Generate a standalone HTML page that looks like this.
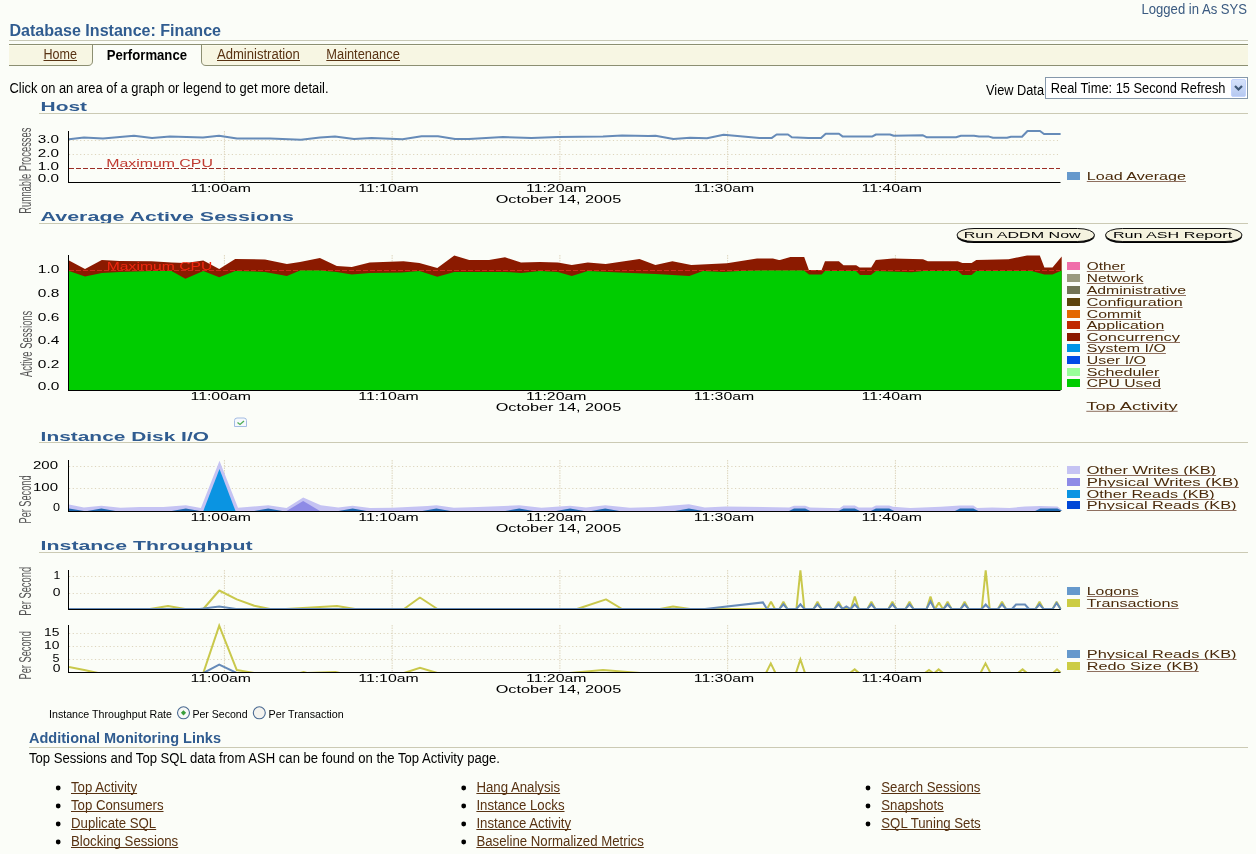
<!DOCTYPE html>
<html><head><meta charset="utf-8"><title>Performance</title>
<style>
html,body{margin:0;padding:0;background:#fbfdf8;width:1256px;height:854px;overflow:hidden}
svg{display:block;position:absolute;left:0;top:0;will-change:transform}
text{font-family:"Liberation Sans", sans-serif}
</style></head><body>
<svg width="1256" height="854" viewBox="0 0 1256 854">
<rect x="0" y="0" width="1256" height="854" fill="#fbfdf8"/>
<text x="9.5" y="36" font-size="16" fill="#305c90" font-weight="bold" textLength="211.5" lengthAdjust="spacingAndGlyphs">Database Instance: Finance</text>
<text transform="translate(1141.5,14) scale(1,1.07)" x="0" y="0" font-size="13" fill="#3a5a80" textLength="105.5" lengthAdjust="spacingAndGlyphs">Logged in As SYS</text>
<line x1="9" y1="40.5" x2="1248" y2="40.5" stroke="#c9c9b6" stroke-width="1"/>
<path d="M9,45 H92.5 V61 Q92.5,65.5 88,65.5 H9 Z" fill="#f7f6e3"/>
<path d="M201.5,45 H1248 V65.5 H206 Q201.5,65.5 201.5,61 Z" fill="#f7f6e3"/>
<line x1="9" y1="44.5" x2="1248" y2="44.5" stroke="#8c8f72" stroke-width="1"/>
<line x1="9" y1="45.5" x2="92" y2="45.5" stroke="#fdfcec" stroke-width="1"/>
<line x1="202" y1="45.5" x2="1248" y2="45.5" stroke="#fdfcec" stroke-width="1"/>
<path d="M9,65.5 H88 Q92.5,65.5 92.5,61 V45" fill="none" stroke="#8c8f72" stroke-width="1"/>
<path d="M201.5,45 V61 Q201.5,65.5 206,65.5 H1248" fill="none" stroke="#8c8f72" stroke-width="1"/>
<text transform="translate(43.5,59) scale(1,1.07)" x="0" y="0" font-size="13" fill="#583212" textLength="33.5" lengthAdjust="spacingAndGlyphs">Home</text>
<line x1="43.5" y1="60.5" x2="77" y2="60.5" stroke="#583212" stroke-width="1"/>
<text transform="translate(106.7,59.6) scale(1,1.1)" x="0" y="0" font-size="13" fill="#000" font-weight="bold" textLength="80.3" lengthAdjust="spacingAndGlyphs">Performance</text>
<text transform="translate(217,59) scale(1,1.07)" x="0" y="0" font-size="13" fill="#583212" textLength="82.8" lengthAdjust="spacingAndGlyphs">Administration</text>
<line x1="217" y1="60.5" x2="300" y2="60.5" stroke="#583212" stroke-width="1"/>
<text transform="translate(326.3,59) scale(1,1.07)" x="0" y="0" font-size="13" fill="#583212" textLength="73.5" lengthAdjust="spacingAndGlyphs">Maintenance</text>
<line x1="326.3" y1="60.5" x2="400" y2="60.5" stroke="#583212" stroke-width="1"/>
<text transform="translate(9.5,93.4) scale(1,1.07)" x="0" y="0" font-size="13" fill="#000" textLength="319" lengthAdjust="spacingAndGlyphs">Click on an area of a graph or legend to get more detail.</text>
<text transform="translate(986,95) scale(1,1.07)" x="0" y="0" font-size="13" fill="#000" textLength="58" lengthAdjust="spacingAndGlyphs">View Data</text>
<rect x="1045.5" y="77.5" width="202" height="21" fill="#ffffff" stroke="#8598ab" stroke-width="1"/>
<text transform="translate(1050.8,93) scale(1,1.07)" x="0" y="0" font-size="13" fill="#000" textLength="174.7" lengthAdjust="spacingAndGlyphs">Real Time: 15 Second Refresh</text>
<defs><linearGradient id="sg" x1="0" y1="0" x2="0" y2="1"><stop offset="0" stop-color="#d6e2fb"/><stop offset="1" stop-color="#b5c8f0"/></linearGradient></defs>
<rect x="1231.5" y="79.5" width="14" height="17" rx="1.5" fill="url(#sg)" stroke="#c3d3fd" stroke-width="1"/>
<path d="M1235,86 L1238.5,89.5 L1242,86" fill="none" stroke="#3e5675" stroke-width="2.2"/>
<text x="40.6" y="111" font-size="13" fill="#305c90" font-weight="bold" textLength="46.5" lengthAdjust="spacingAndGlyphs">Host</text>
<line x1="39" y1="113.5" x2="1248" y2="113.5" stroke="#cbcab4" stroke-width="1"/>
<text x="40.6" y="220.5" font-size="13" fill="#305c90" font-weight="bold" textLength="253.4" lengthAdjust="spacingAndGlyphs">Average Active Sessions</text>
<line x1="39" y1="223.5" x2="1248" y2="223.5" stroke="#cbcab4" stroke-width="1"/>
<text x="40.6" y="440.7" font-size="13" fill="#305c90" font-weight="bold" textLength="168.4" lengthAdjust="spacingAndGlyphs">Instance Disk I/O</text>
<line x1="39" y1="442.5" x2="1248" y2="442.5" stroke="#cbcab4" stroke-width="1"/>
<text x="40.6" y="549.8" font-size="13" fill="#305c90" font-weight="bold" textLength="212" lengthAdjust="spacingAndGlyphs">Instance Throughput</text>
<line x1="39" y1="552.5" x2="1248" y2="552.5" stroke="#cbcab4" stroke-width="1"/>
<line x1="224.4" y1="131" x2="224.4" y2="182" stroke="#ddd5bd" stroke-width="1" stroke-dasharray="1.5,1"/>
<line x1="392.15" y1="131" x2="392.15" y2="182" stroke="#ddd5bd" stroke-width="1" stroke-dasharray="1.5,1"/>
<line x1="559.9" y1="131" x2="559.9" y2="182" stroke="#ddd5bd" stroke-width="1" stroke-dasharray="1.5,1"/>
<line x1="727.65" y1="131" x2="727.65" y2="182" stroke="#ddd5bd" stroke-width="1" stroke-dasharray="1.5,1"/>
<line x1="895.4" y1="131" x2="895.4" y2="182" stroke="#ddd5bd" stroke-width="1" stroke-dasharray="1.5,1"/>
<line x1="69" y1="140.5" x2="1058" y2="140.5" stroke="#ddd5bd" stroke-width="1" stroke-dasharray="1.2,2.5"/>
<line x1="69" y1="154.5" x2="1058" y2="154.5" stroke="#ddd5bd" stroke-width="1" stroke-dasharray="1.2,2.5"/>
<polyline points="69.0,139.3 84.0,137.4 103.0,138.6 134.0,135.7 152.0,138.1 170.0,136.5 203.0,137.4 219.0,135.7 237.0,138.4 270.0,138.6 301.0,139.8 320.0,137.4 335.0,136.5 354.0,138.9 371.5,138.1 402.5,139.3 421.6,136.2 438.0,136.2 455.0,138.9 469.0,138.9 503.0,137.0 531.5,138.1 557.8,137.0 603.0,136.5 622.0,135.5 648.5,136.0 655.5,135.8 673.4,139.1 690.0,137.7 707.0,138.2 723.6,134.8 759.4,137.9 771.5,138.1 776.6,134.5 788.0,134.5 791.8,137.3 808.4,138.0 821.0,138.0 825.7,133.8 839.0,133.8 842.8,136.6 872.0,136.6 876.0,134.5 890.0,134.5 893.8,135.8 923.0,135.3 926.9,137.3 956.0,137.3 961.0,135.8 974.0,135.8 979.0,136.6 989.0,136.6 993.0,137.8 1007.0,137.8 1011.0,136.8 1022.0,136.8 1027.5,131.0 1040.0,131.0 1044.0,134.0 1060.6,134.0" fill="none" stroke="#668bb8" stroke-width="2" stroke-linejoin="round"/>
<line x1="69" y1="168.5" x2="1060" y2="168.5" stroke="#9b2d26" stroke-width="1" stroke-dasharray="5,2"/>
<text x="106.2" y="167.1" font-size="10" fill="#c03a30" textLength="106.7" lengthAdjust="spacingAndGlyphs">Maximum CPU</text>
<line x1="68.5" y1="131" x2="68.5" y2="183" stroke="#000" stroke-width="1"/>
<line x1="68" y1="182.5" x2="1060.5" y2="182.5" stroke="#000" stroke-width="1"/>
<text x="37.7" y="143" font-size="10" fill="#000" textLength="21.2" lengthAdjust="spacingAndGlyphs">3.0</text>
<text x="37.7" y="156.5" font-size="10" fill="#000" textLength="21.2" lengthAdjust="spacingAndGlyphs">2.0</text>
<text x="37.7" y="170.4" font-size="10" fill="#000" textLength="21.2" lengthAdjust="spacingAndGlyphs">1.0</text>
<text x="37.7" y="181.7" font-size="10" fill="#000" textLength="21.2" lengthAdjust="spacingAndGlyphs">0.0</text>
<text x="190.5" y="191.5" font-size="10" fill="#000" textLength="60.5" lengthAdjust="spacingAndGlyphs">11:00am</text>
<text x="358.25" y="191.5" font-size="10" fill="#000" textLength="60.5" lengthAdjust="spacingAndGlyphs">11:10am</text>
<text x="526.0" y="191.5" font-size="10" fill="#000" textLength="60.5" lengthAdjust="spacingAndGlyphs">11:20am</text>
<text x="693.75" y="191.5" font-size="10" fill="#000" textLength="60.5" lengthAdjust="spacingAndGlyphs">11:30am</text>
<text x="861.5" y="191.5" font-size="10" fill="#000" textLength="60.5" lengthAdjust="spacingAndGlyphs">11:40am</text>
<text x="495.7" y="202.8" font-size="10" fill="#000" textLength="125.5" lengthAdjust="spacingAndGlyphs">October 14, 2005</text>
<text transform="translate(30.8,170.7) rotate(-90)" x="0" y="0" font-size="16" fill="#555" text-anchor="middle" textLength="86" lengthAdjust="spacingAndGlyphs">Runnable Processes</text>
<rect x="1067" y="172" width="13" height="8" fill="#6699cc"/>
<text x="1086.8" y="180" font-size="10" fill="#4a2a0a" textLength="99.2" lengthAdjust="spacingAndGlyphs">Load Average</text>
<line x1="1086.8" y1="181.5" x2="1186.0" y2="181.5" stroke="#8f7060" stroke-width="1"/>
<line x1="224.4" y1="255" x2="224.4" y2="390" stroke="#ddd5bd" stroke-width="1" stroke-dasharray="1.5,1"/>
<line x1="392.15" y1="255" x2="392.15" y2="390" stroke="#ddd5bd" stroke-width="1" stroke-dasharray="1.5,1"/>
<line x1="559.9" y1="255" x2="559.9" y2="390" stroke="#ddd5bd" stroke-width="1" stroke-dasharray="1.5,1"/>
<line x1="727.65" y1="255" x2="727.65" y2="390" stroke="#ddd5bd" stroke-width="1" stroke-dasharray="1.5,1"/>
<line x1="895.4" y1="255" x2="895.4" y2="390" stroke="#ddd5bd" stroke-width="1" stroke-dasharray="1.5,1"/>
<polygon points="69.0,260.5 85.0,268.9 101.8,259.9 119.7,261.0 151.6,261.3 171.5,262.5 185.4,263.0 203.3,260.5 219.2,268.9 235.2,259.0 265.0,259.5 286.9,264.0 300.0,261.9 319.9,257.9 336.8,265.9 351.8,266.9 369.7,262.5 403.5,261.3 419.4,262.9 437.3,267.9 454.3,255.4 469.2,259.9 489.0,259.9 505.0,257.3 521.0,262.5 540.0,261.9 557.9,262.5 571.8,264.9 587.8,262.5 605.7,263.9 639.5,258.9 655.4,264.9 672.4,261.3 691.3,264.9 727.0,263.3 757.0,258.5 772.9,258.5 778.9,259.9 780.0,260.0 790.4,257.0 804.2,257.0 808.9,269.9 821.6,269.9 825.0,261.2 838.9,261.2 843.5,265.3 856.2,265.3 859.7,267.4 871.2,267.4 875.8,260.0 893.0,258.4 923.0,259.3 927.8,261.2 957.8,261.2 962.4,263.0 971.6,263.0 976.3,260.0 1008.6,259.3 1027.0,255.4 1039.8,255.4 1044.4,267.6 1052.5,267.6 1061.7,256.5 1061.7,390.0 69.0,390.0" fill="#8b1a00"/>
<line x1="69" y1="270.5" x2="1060" y2="270.5" stroke="#d0261c" stroke-width="1" stroke-dasharray="5,2"/>
<polygon points="69.0,270.9 85.0,276.4 101.8,272.9 119.7,271.9 151.6,270.9 171.5,270.9 185.4,278.8 203.3,270.9 219.2,277.2 235.2,270.9 265.0,271.9 286.9,275.9 300.0,270.5 319.9,270.5 336.8,271.9 351.8,274.5 369.7,272.9 401.5,272.5 419.4,270.9 437.3,276.8 454.3,271.9 505.0,271.9 521.0,272.9 540.0,270.9 557.9,271.9 571.8,275.9 587.8,270.9 619.6,272.5 655.4,273.9 689.3,275.9 703.0,270.9 723.0,271.9 739.0,270.9 780.0,270.4 804.0,270.4 809.0,274.6 821.6,274.6 825.0,270.9 856.0,270.9 860.0,275.0 871.0,275.0 876.0,270.9 911.6,272.2 923.0,270.9 958.0,270.9 962.4,275.0 971.6,275.0 976.3,270.9 1008.6,270.9 1031.7,270.9 1044.4,274.6 1052.5,274.6 1061.7,270.4 1061.7,390.0 69.0,390.0" fill="#00cc00"/>
<text x="106.8" y="269.5" font-size="10" fill="#f02810" textLength="105.5" lengthAdjust="spacingAndGlyphs">Maximum CPU</text>
<line x1="68.5" y1="255" x2="68.5" y2="391" stroke="#000" stroke-width="1"/>
<line x1="68" y1="390.5" x2="1060.5" y2="390.5" stroke="#000" stroke-width="1"/>
<text x="37.8" y="272.7" font-size="10" fill="#000" textLength="21.5" lengthAdjust="spacingAndGlyphs">1.0</text>
<text x="37.8" y="296.5" font-size="10" fill="#000" textLength="21.5" lengthAdjust="spacingAndGlyphs">0.8</text>
<text x="37.8" y="320.6" font-size="10" fill="#000" textLength="21.5" lengthAdjust="spacingAndGlyphs">0.6</text>
<text x="37.8" y="344.4" font-size="10" fill="#000" textLength="21.5" lengthAdjust="spacingAndGlyphs">0.4</text>
<text x="37.8" y="368.3" font-size="10" fill="#000" textLength="21.5" lengthAdjust="spacingAndGlyphs">0.2</text>
<text x="37.8" y="389.8" font-size="10" fill="#000" textLength="21.5" lengthAdjust="spacingAndGlyphs">0.0</text>
<text x="190.5" y="399.5" font-size="10" fill="#000" textLength="60.5" lengthAdjust="spacingAndGlyphs">11:00am</text>
<text x="358.25" y="399.5" font-size="10" fill="#000" textLength="60.5" lengthAdjust="spacingAndGlyphs">11:10am</text>
<text x="526.0" y="399.5" font-size="10" fill="#000" textLength="60.5" lengthAdjust="spacingAndGlyphs">11:20am</text>
<text x="693.75" y="399.5" font-size="10" fill="#000" textLength="60.5" lengthAdjust="spacingAndGlyphs">11:30am</text>
<text x="861.5" y="399.5" font-size="10" fill="#000" textLength="60.5" lengthAdjust="spacingAndGlyphs">11:40am</text>
<text x="495.7" y="410.8" font-size="10" fill="#000" textLength="125.5" lengthAdjust="spacingAndGlyphs">October 14, 2005</text>
<text transform="translate(31.5,343.9) rotate(-90)" x="0" y="0" font-size="16" fill="#555" text-anchor="middle" textLength="66.4" lengthAdjust="spacingAndGlyphs">Active Sessions</text>
<rect x="1067" y="262" width="13" height="8" fill="#f06eaa"/>
<text x="1086.8" y="270" font-size="10" fill="#4a2a0a" textLength="38.4" lengthAdjust="spacingAndGlyphs">Other</text>
<line x1="1086.8" y1="271.5" x2="1125.2" y2="271.5" stroke="#8f7060" stroke-width="1"/>
<rect x="1067" y="274" width="13" height="8" fill="#9a9a7e"/>
<text x="1086.8" y="282" font-size="10" fill="#4a2a0a" textLength="56.6" lengthAdjust="spacingAndGlyphs">Network</text>
<line x1="1086.8" y1="283.5" x2="1143.3999999999999" y2="283.5" stroke="#8f7060" stroke-width="1"/>
<rect x="1067" y="286" width="13" height="8" fill="#717354"/>
<text x="1086.8" y="294" font-size="10" fill="#4a2a0a" textLength="99.2" lengthAdjust="spacingAndGlyphs">Administrative</text>
<line x1="1086.8" y1="295.5" x2="1186.0" y2="295.5" stroke="#8f7060" stroke-width="1"/>
<rect x="1067" y="298" width="13" height="8" fill="#5c440b"/>
<text x="1086.8" y="306" font-size="10" fill="#4a2a0a" textLength="95.8" lengthAdjust="spacingAndGlyphs">Configuration</text>
<line x1="1086.8" y1="307.5" x2="1182.6" y2="307.5" stroke="#8f7060" stroke-width="1"/>
<rect x="1067" y="310" width="13" height="8" fill="#e46800"/>
<text x="1086.8" y="318" font-size="10" fill="#4a2a0a" textLength="54.4" lengthAdjust="spacingAndGlyphs">Commit</text>
<line x1="1086.8" y1="319.5" x2="1141.2" y2="319.5" stroke="#8f7060" stroke-width="1"/>
<rect x="1067" y="321" width="13" height="8" fill="#c02800"/>
<text x="1086.8" y="329" font-size="10" fill="#4a2a0a" textLength="77.4" lengthAdjust="spacingAndGlyphs">Application</text>
<line x1="1086.8" y1="330.5" x2="1164.2" y2="330.5" stroke="#8f7060" stroke-width="1"/>
<rect x="1067" y="333" width="13" height="8" fill="#8b1a00"/>
<text x="1086.8" y="341" font-size="10" fill="#4a2a0a" textLength="93.2" lengthAdjust="spacingAndGlyphs">Concurrency</text>
<line x1="1086.8" y1="342.5" x2="1180.0" y2="342.5" stroke="#8f7060" stroke-width="1"/>
<rect x="1067" y="344" width="13" height="8" fill="#0094e7"/>
<text x="1086.8" y="352" font-size="10" fill="#4a2a0a" textLength="79.1" lengthAdjust="spacingAndGlyphs">System I/O</text>
<line x1="1086.8" y1="353.5" x2="1165.8999999999999" y2="353.5" stroke="#8f7060" stroke-width="1"/>
<rect x="1067" y="356" width="13" height="8" fill="#004ae7"/>
<text x="1086.8" y="364" font-size="10" fill="#4a2a0a" textLength="59.2" lengthAdjust="spacingAndGlyphs">User I/O</text>
<line x1="1086.8" y1="365.5" x2="1146.0" y2="365.5" stroke="#8f7060" stroke-width="1"/>
<rect x="1067" y="368" width="13" height="8" fill="#99ff99"/>
<text x="1086.8" y="376" font-size="10" fill="#4a2a0a" textLength="72.5" lengthAdjust="spacingAndGlyphs">Scheduler</text>
<line x1="1086.8" y1="377.5" x2="1159.3" y2="377.5" stroke="#8f7060" stroke-width="1"/>
<rect x="1067" y="379" width="13" height="8" fill="#00cc00"/>
<text x="1086.8" y="387" font-size="10" fill="#4a2a0a" textLength="74.1" lengthAdjust="spacingAndGlyphs">CPU Used</text>
<line x1="1086.8" y1="388.5" x2="1160.8999999999999" y2="388.5" stroke="#8f7060" stroke-width="1"/>
<text x="1086.3" y="409.8" font-size="10" fill="#4a2a0a" textLength="91.3" lengthAdjust="spacingAndGlyphs">Top Activity</text>
<line x1="1086.3" y1="411.3" x2="1177.6" y2="411.3" stroke="#8f7060" stroke-width="1"/>
<path d="M974,230.1 H1077.5 A17,6.5 0 0 1 1077.5,243.1 H974 A17,6.5 0 0 1 974,230.1 Z" fill="#000"/>
<path d="M974,228.5 H1077.5 A17,6.5 0 0 1 1077.5,241.5 H974 A17,6.5 0 0 1 974,228.5 Z" fill="#f5f3df" stroke="#111" stroke-width="1"/>
<text x="963.7" y="238.1" font-size="9.6" fill="#000" textLength="117" lengthAdjust="spacingAndGlyphs">Run ADDM Now</text>
<path d="M1122.5,230.1 H1225 A17,6.5 0 0 1 1225,243.1 H1122.5 A17,6.5 0 0 1 1122.5,230.1 Z" fill="#000"/>
<path d="M1122.5,228.5 H1225 A17,6.5 0 0 1 1225,241.5 H1122.5 A17,6.5 0 0 1 1122.5,228.5 Z" fill="#f5f3df" stroke="#111" stroke-width="1"/>
<text x="1112.9" y="238.1" font-size="9.6" fill="#000" textLength="119.3" lengthAdjust="spacingAndGlyphs">Run ASH Report</text>
<path d="M234.5,420.5 Q234.5,418 237,418 L244,418 Q246.5,418 246.5,420.5 L246.5,426.5 L234.5,426.5 Z" fill="#f6f9fd" stroke="#a4bde3" stroke-width="1"/>
<path d="M237.5,422.5 L240,424.5 L244,421" fill="none" stroke="#4fae55" stroke-width="1.3"/>
<line x1="224.4" y1="460" x2="224.4" y2="511" stroke="#ddd5bd" stroke-width="1" stroke-dasharray="1.5,1"/>
<line x1="392.15" y1="460" x2="392.15" y2="511" stroke="#ddd5bd" stroke-width="1" stroke-dasharray="1.5,1"/>
<line x1="559.9" y1="460" x2="559.9" y2="511" stroke="#ddd5bd" stroke-width="1" stroke-dasharray="1.5,1"/>
<line x1="727.65" y1="460" x2="727.65" y2="511" stroke="#ddd5bd" stroke-width="1" stroke-dasharray="1.5,1"/>
<line x1="895.4" y1="460" x2="895.4" y2="511" stroke="#ddd5bd" stroke-width="1" stroke-dasharray="1.5,1"/>
<line x1="69" y1="466.5" x2="1058" y2="466.5" stroke="#ddd5bd" stroke-width="1" stroke-dasharray="1.2,2.5"/>
<line x1="69" y1="488.5" x2="1058" y2="488.5" stroke="#ddd5bd" stroke-width="1" stroke-dasharray="1.2,2.5"/>
<polygon points="69.0,504.5 83.9,507.4 101.4,505.8 120.5,507.7 139.6,506.9 163.5,506.9 185.8,505.3 200.9,508.0 219.5,460.7 238.0,507.7 268.2,505.3 286.5,508.0 303.2,497.4 320.8,505.3 338.3,507.4 352.6,505.8 370.0,508.0 392.4,507.7 427.5,506.1 436.4,505.3 453.9,507.7 477.8,506.9 519.2,505.3 541.5,507.7 570.1,505.8 586.0,507.4 605.2,505.3 630.0,507.7 653.9,506.9 688.9,504.2 704.8,507.4 725.5,506.4 789.2,507.4 794.0,505.8 805.2,505.8 810.0,507.4 839.6,508.3 843.4,505.5 854.8,505.5 858.7,507.4 872.0,507.4 875.9,505.5 889.2,505.5 893.0,506.8 910.3,508.0 940.8,506.8 960.0,505.5 973.3,505.5 977.1,508.0 992.4,507.4 1009.6,508.0 1025.0,506.4 1040.2,506.0 1057.4,506.4 1061.2,509.3 1061.2,511.0 69.0,511.0" fill="#c5c3f3"/>
<polygon points="286.5,511.0 303.2,501.0 320.0,511.0" fill="#8e8be6"/>
<polygon points="203.3,511.0 219.5,469.1 235.5,511.0" fill="#0a94e2"/>
<polygon points="87.4,511.0 101.4,508.6 115.4,511.0" fill="#2068b0"/>
<polygon points="171.8,511.0 185.8,508.6 199.8,511.0" fill="#2068b0"/>
<polygon points="254.2,511.0 268.2,508.6 282.2,511.0" fill="#2068b0"/>
<polygon points="338.6,511.0 352.6,508.6 366.6,511.0" fill="#2068b0"/>
<polygon points="422.4,511.0 436.4,508.6 450.4,511.0" fill="#2068b0"/>
<polygon points="505.2,511.0 519.2,508.6 533.2,511.0" fill="#2068b0"/>
<polygon points="556.1,511.0 570.1,508.6 584.1,511.0" fill="#2068b0"/>
<polygon points="591.2,511.0 605.2,508.6 619.2,511.0" fill="#2068b0"/>
<polygon points="674.9,511.0 688.9,508.6 702.9,511.0" fill="#2068b0"/>
<polygon points="789.0,511.0 794.0,508.6 805.2,508.6 810.2,511.0" fill="#2068b0"/>
<polygon points="838.4,511.0 843.4,508.6 854.8,508.6 859.8,511.0" fill="#2068b0"/>
<polygon points="870.9,511.0 875.9,508.6 889.2,508.6 894.2,511.0" fill="#2068b0"/>
<polygon points="955.0,511.0 960.0,508.6 973.3,508.6 978.3,511.0" fill="#2068b0"/>
<polygon points="1035.2,511.0 1040.2,508.6 1057.4,508.6 1062.4,511.0" fill="#2068b0"/>
<polygon points="69.0,508.4 84.0,511.0 69.0,511.0" fill="#2068b0"/>
<line x1="68.5" y1="460" x2="68.5" y2="512" stroke="#000" stroke-width="1"/>
<line x1="68" y1="511.5" x2="1060.5" y2="511.5" stroke="#000" stroke-width="1"/>
<text x="33" y="468.6" font-size="10" fill="#000" textLength="25" lengthAdjust="spacingAndGlyphs">200</text>
<text x="33" y="491.4" font-size="10" fill="#000" textLength="25" lengthAdjust="spacingAndGlyphs">100</text>
<text x="53" y="511.2" font-size="10" fill="#000" textLength="7" lengthAdjust="spacingAndGlyphs">0</text>
<text x="190.5" y="520.5" font-size="10" fill="#000" textLength="60.5" lengthAdjust="spacingAndGlyphs">11:00am</text>
<text x="358.25" y="520.5" font-size="10" fill="#000" textLength="60.5" lengthAdjust="spacingAndGlyphs">11:10am</text>
<text x="526.0" y="520.5" font-size="10" fill="#000" textLength="60.5" lengthAdjust="spacingAndGlyphs">11:20am</text>
<text x="693.75" y="520.5" font-size="10" fill="#000" textLength="60.5" lengthAdjust="spacingAndGlyphs">11:30am</text>
<text x="861.5" y="520.5" font-size="10" fill="#000" textLength="60.5" lengthAdjust="spacingAndGlyphs">11:40am</text>
<text x="495.7" y="531.8" font-size="10" fill="#000" textLength="125.5" lengthAdjust="spacingAndGlyphs">October 14, 2005</text>
<text transform="translate(31,499.5) rotate(-90)" x="0" y="0" font-size="16" fill="#555" text-anchor="middle" textLength="48" lengthAdjust="spacingAndGlyphs">Per Second</text>
<rect x="1067" y="466" width="13" height="8" fill="#c5c3f3"/>
<text x="1086.8" y="474" font-size="10" fill="#4a2a0a" textLength="129.3" lengthAdjust="spacingAndGlyphs">Other Writes (KB)</text>
<line x1="1086.8" y1="475.5" x2="1216.1" y2="475.5" stroke="#8f7060" stroke-width="1"/>
<rect x="1067" y="478" width="13" height="8" fill="#8e8be6"/>
<text x="1086.8" y="486" font-size="10" fill="#4a2a0a" textLength="152" lengthAdjust="spacingAndGlyphs">Physical Writes (KB)</text>
<line x1="1086.8" y1="487.5" x2="1238.8" y2="487.5" stroke="#8f7060" stroke-width="1"/>
<rect x="1067" y="490" width="13" height="8" fill="#0a94e2"/>
<text x="1086.8" y="498" font-size="10" fill="#4a2a0a" textLength="127.8" lengthAdjust="spacingAndGlyphs">Other Reads (KB)</text>
<line x1="1086.8" y1="499.5" x2="1214.6" y2="499.5" stroke="#8f7060" stroke-width="1"/>
<rect x="1067" y="501" width="13" height="8" fill="#0047d6"/>
<text x="1086.8" y="509" font-size="10" fill="#4a2a0a" textLength="149.7" lengthAdjust="spacingAndGlyphs">Physical Reads (KB)</text>
<line x1="1086.8" y1="510.5" x2="1236.5" y2="510.5" stroke="#8f7060" stroke-width="1"/>
<line x1="224.4" y1="570" x2="224.4" y2="609" stroke="#ddd5bd" stroke-width="1" stroke-dasharray="1.5,1"/>
<line x1="392.15" y1="570" x2="392.15" y2="609" stroke="#ddd5bd" stroke-width="1" stroke-dasharray="1.5,1"/>
<line x1="559.9" y1="570" x2="559.9" y2="609" stroke="#ddd5bd" stroke-width="1" stroke-dasharray="1.5,1"/>
<line x1="727.65" y1="570" x2="727.65" y2="609" stroke="#ddd5bd" stroke-width="1" stroke-dasharray="1.5,1"/>
<line x1="895.4" y1="570" x2="895.4" y2="609" stroke="#ddd5bd" stroke-width="1" stroke-dasharray="1.5,1"/>
<line x1="69" y1="576.5" x2="1058" y2="576.5" stroke="#ddd5bd" stroke-width="1" stroke-dasharray="1.2,2.5"/>
<line x1="69" y1="593.5" x2="1058" y2="593.5" stroke="#ddd5bd" stroke-width="1" stroke-dasharray="1.2,2.5"/>
<polyline points="69.0,609.0 150.0,609.0 168.0,606.0 185.0,609.0 203.3,609.0 219.2,590.5 236.8,599.4 254.3,605.8 270.0,609.0 286.0,609.0 337.0,606.0 355.0,609.0 404.0,609.0 419.9,597.5 437.4,609.0 577.0,609.0 606.0,599.4 622.0,609.0 660.0,609.0 673.0,606.4 690.0,609.0 760.0,609.0 767.0,609.0 771.0,601.8 775.0,609.0 779.4,609.0 783.4,601.8 787.4,609.0 796.4,609.0 800.4,570.3 804.4,609.0 813.5,609.0 817.5,601.8 821.5,609.0 834.5,609.0 838.5,601.8 842.5,609.0 850.8,609.0 854.8,596.5 858.8,609.0 867.4,609.0 871.4,601.8 875.4,609.0 888.4,609.0 892.4,601.8 896.4,609.0 905.5,609.0 909.5,601.8 913.5,609.0 926.5,609.0 930.5,596.5 934.5,609.0 934.9,609.0 938.9,602.6 942.9,609.0 943.6,609.0 947.6,601.8 951.6,609.0 960.6,609.0 964.6,601.8 968.6,609.0 981.7,609.0 985.7,570.3 989.7,609.0 998.0,609.0 1002.0,601.8 1006.0,609.0 1035.5,609.0 1039.5,601.8 1043.5,609.0 1052.6,609.0 1056.6,601.8 1060.6,609.0 1061.0,609.0" fill="none" stroke="#c9c84b" stroke-width="2" stroke-linejoin="bevel"/>
<polyline points="69.0,609.0 200.0,609.0 219.2,606.4 236.0,609.0 705.0,609.0 762.9,602.4 767.0,609.0 779.4,609.0 783.4,604.3 787.4,609.0 796.4,609.0 800.4,604.3 804.4,609.0 813.5,609.0 817.5,604.3 821.5,609.0 834.5,609.0 838.5,604.3 842.5,609.0 842.4,609.0 846.4,606.5 850.4,609.0 850.8,609.0 854.8,604.3 858.8,609.0 867.4,609.0 871.4,604.3 875.4,609.0 888.4,609.0 892.4,604.3 896.4,609.0 905.5,609.0 909.5,604.3 913.5,609.0 926.5,609.0 930.5,601.3 934.5,609.0 943.6,609.0 947.6,604.3 951.6,609.0 960.6,609.0 964.6,604.3 968.6,609.0 981.7,609.0 985.7,604.5 989.7,609.0 998.0,609.0 1002.0,604.3 1006.0,609.0 1035.5,609.0 1039.5,604.3 1043.5,609.0 1052.6,609.0 1056.6,603.0 1060.6,609.0 1061.0,609.0" fill="none" stroke="#668bb8" stroke-width="2"/>
<polyline points="1012.0,609.0 1016.0,604.5 1025.0,604.5 1029.0,609.0" fill="none" stroke="#668bb8" stroke-width="2"/>
<line x1="68.5" y1="570" x2="68.5" y2="610" stroke="#000" stroke-width="1"/>
<line x1="68" y1="609.5" x2="1060.5" y2="609.5" stroke="#000" stroke-width="1"/>
<text x="53.6" y="579.4" font-size="10" fill="#000" textLength="6.8" lengthAdjust="spacingAndGlyphs">1</text>
<text x="52.7" y="595.9" font-size="10" fill="#000" textLength="7.7" lengthAdjust="spacingAndGlyphs">0</text>
<text transform="translate(31.4,591.3) rotate(-90)" x="0" y="0" font-size="16" fill="#555" text-anchor="middle" textLength="49" lengthAdjust="spacingAndGlyphs">Per Second</text>
<rect x="1067" y="587" width="13" height="8" fill="#6699cc"/>
<text x="1086.8" y="595" font-size="10" fill="#4a2a0a" textLength="51.9" lengthAdjust="spacingAndGlyphs">Logons</text>
<line x1="1086.8" y1="596.5" x2="1138.7" y2="596.5" stroke="#8f7060" stroke-width="1"/>
<rect x="1067" y="599" width="13" height="8" fill="#cccc44"/>
<text x="1086.8" y="607" font-size="10" fill="#4a2a0a" textLength="91.8" lengthAdjust="spacingAndGlyphs">Transactions</text>
<line x1="1086.8" y1="608.5" x2="1178.6" y2="608.5" stroke="#8f7060" stroke-width="1"/>
<line x1="224.4" y1="625" x2="224.4" y2="672" stroke="#ddd5bd" stroke-width="1" stroke-dasharray="1.5,1"/>
<line x1="392.15" y1="625" x2="392.15" y2="672" stroke="#ddd5bd" stroke-width="1" stroke-dasharray="1.5,1"/>
<line x1="559.9" y1="625" x2="559.9" y2="672" stroke="#ddd5bd" stroke-width="1" stroke-dasharray="1.5,1"/>
<line x1="727.65" y1="625" x2="727.65" y2="672" stroke="#ddd5bd" stroke-width="1" stroke-dasharray="1.5,1"/>
<line x1="895.4" y1="625" x2="895.4" y2="672" stroke="#ddd5bd" stroke-width="1" stroke-dasharray="1.5,1"/>
<line x1="69" y1="633.5" x2="1058" y2="633.5" stroke="#ddd5bd" stroke-width="1" stroke-dasharray="1.2,2.5"/>
<line x1="69" y1="646.5" x2="1058" y2="646.5" stroke="#ddd5bd" stroke-width="1" stroke-dasharray="1.2,2.5"/>
<line x1="69" y1="659.5" x2="1058" y2="659.5" stroke="#ddd5bd" stroke-width="1" stroke-dasharray="1.2,2.5"/>
<clipPath id="c2"><rect x="69" y="620" width="1000" height="52"/></clipPath>
<polyline points="69.0,667.1 85.5,670.3 98.0,673.0 203.3,673.0 219.2,625.7 236.8,670.0 254.0,673.0 303.6,673.0 300.0,673.0 303.6,672.0 307.0,673.0 335.5,672.0 340.0,673.0 404.0,673.0 420.0,667.8 437.4,673.0 570.0,673.0 603.0,669.9 640.0,673.0 766.0,673.0 770.8,663.4 775.5,673.0 796.0,673.0 800.4,659.5 805.0,673.0 850.0,673.0 854.7,669.4 859.0,673.0 925.0,673.0 929.0,670.0 933.0,673.0 934.5,673.0 938.6,669.4 943.0,673.0 980.5,673.0 985.5,663.4 990.5,673.0 1018.0,673.0 1022.6,669.4 1027.0,673.0 1053.0,673.0 1057.0,669.4 1061.0,673.0" fill="none" stroke="#c9c84b" stroke-width="2" clip-path="url(#c2)"/>
<polyline points="69.0,673.0 203.3,673.0 219.2,664.6 236.8,673.0 1061.0,673.0" fill="none" stroke="#668bb8" stroke-width="2" clip-path="url(#c2)"/>
<line x1="68.5" y1="625" x2="68.5" y2="673" stroke="#000" stroke-width="1"/>
<line x1="68" y1="672.5" x2="1060.5" y2="672.5" stroke="#000" stroke-width="1"/>
<text x="44" y="635.9" font-size="10" fill="#000" textLength="15.4" lengthAdjust="spacingAndGlyphs">15</text>
<text x="44" y="649" font-size="10" fill="#000" textLength="15.4" lengthAdjust="spacingAndGlyphs">10</text>
<text x="52.5" y="662" font-size="10" fill="#000" textLength="7" lengthAdjust="spacingAndGlyphs">5</text>
<text x="52.7" y="672.2" font-size="10" fill="#000" textLength="7.7" lengthAdjust="spacingAndGlyphs">0</text>
<text x="190.5" y="681.5" font-size="10" fill="#000" textLength="60.5" lengthAdjust="spacingAndGlyphs">11:00am</text>
<text x="358.25" y="681.5" font-size="10" fill="#000" textLength="60.5" lengthAdjust="spacingAndGlyphs">11:10am</text>
<text x="526.0" y="681.5" font-size="10" fill="#000" textLength="60.5" lengthAdjust="spacingAndGlyphs">11:20am</text>
<text x="693.75" y="681.5" font-size="10" fill="#000" textLength="60.5" lengthAdjust="spacingAndGlyphs">11:30am</text>
<text x="861.5" y="681.5" font-size="10" fill="#000" textLength="60.5" lengthAdjust="spacingAndGlyphs">11:40am</text>
<text x="495.7" y="692.8" font-size="10" fill="#000" textLength="125.5" lengthAdjust="spacingAndGlyphs">October 14, 2005</text>
<text transform="translate(31.4,655.3) rotate(-90)" x="0" y="0" font-size="16" fill="#555" text-anchor="middle" textLength="48.3" lengthAdjust="spacingAndGlyphs">Per Second</text>
<rect x="1067" y="650" width="13" height="8" fill="#6699cc"/>
<text x="1086.8" y="658" font-size="10" fill="#4a2a0a" textLength="149.7" lengthAdjust="spacingAndGlyphs">Physical Reads (KB)</text>
<line x1="1086.8" y1="659.5" x2="1236.5" y2="659.5" stroke="#8f7060" stroke-width="1"/>
<rect x="1067" y="662" width="13" height="8" fill="#cccc44"/>
<text x="1086.8" y="670" font-size="10" fill="#4a2a0a" textLength="111.9" lengthAdjust="spacingAndGlyphs">Redo Size (KB)</text>
<line x1="1086.8" y1="671.5" x2="1198.7" y2="671.5" stroke="#8f7060" stroke-width="1"/>
<text x="49" y="718.3" font-size="11.6" fill="#000" textLength="123" lengthAdjust="spacingAndGlyphs">Instance Throughput Rate</text>
<circle cx="183.5" cy="712.8" r="6" fill="#f7f8f6" stroke="#4a6a92" stroke-width="1.1"/>
<path d="M183.5,710.2 L186.1,712.8 L183.5,715.4 L180.9,712.8 Z" fill="#3a9e3a"/>
<text x="192.4" y="718.3" font-size="11.6" fill="#000" textLength="55.2" lengthAdjust="spacingAndGlyphs">Per Second</text>
<circle cx="259.3" cy="712.8" r="6" fill="#f4f3ee" stroke="#4a6a92" stroke-width="1.1"/>
<text x="268.5" y="718.3" font-size="11.6" fill="#000" textLength="75.2" lengthAdjust="spacingAndGlyphs">Per Transaction</text>
<text transform="translate(29,743) scale(1,1.07)" x="0" y="0" font-size="14.5" fill="#305c90" font-weight="bold" textLength="192" lengthAdjust="spacingAndGlyphs">Additional Monitoring Links</text>
<line x1="29" y1="747.5" x2="1248" y2="747.5" stroke="#cbcab4" stroke-width="1"/>
<text transform="translate(29,763.2) scale(1,1.07)" x="0" y="0" font-size="13" fill="#000" textLength="471" lengthAdjust="spacingAndGlyphs">Top Sessions and Top SQL data from ASH can be found on the Top Activity page.</text>
<circle cx="58.2" cy="788" r="2.4" fill="#000"/>
<text transform="translate(71,792) scale(1,1.07)" x="0" y="0" font-size="13" fill="#583212" textLength="66.1" lengthAdjust="spacingAndGlyphs">Top Activity</text>
<line x1="71" y1="793.5" x2="137.07175" y2="793.5" stroke="#583212" stroke-width="1"/>
<circle cx="58.2" cy="806" r="2.4" fill="#000"/>
<text transform="translate(71,810) scale(1,1.07)" x="0" y="0" font-size="13" fill="#583212" textLength="92.5" lengthAdjust="spacingAndGlyphs">Top Consumers</text>
<line x1="71" y1="811.5" x2="163.5195" y2="811.5" stroke="#583212" stroke-width="1"/>
<circle cx="58.2" cy="824" r="2.4" fill="#000"/>
<text transform="translate(71,828) scale(1,1.07)" x="0" y="0" font-size="13" fill="#583212" textLength="85.2" lengthAdjust="spacingAndGlyphs">Duplicate SQL</text>
<line x1="71" y1="829.5" x2="156.18525" y2="829.5" stroke="#583212" stroke-width="1"/>
<circle cx="58.2" cy="842" r="2.4" fill="#000"/>
<text transform="translate(71,846) scale(1,1.07)" x="0" y="0" font-size="13" fill="#583212" textLength="107.2" lengthAdjust="spacingAndGlyphs">Blocking Sessions</text>
<line x1="71" y1="847.5" x2="178.21975" y2="847.5" stroke="#583212" stroke-width="1"/>
<circle cx="463.7" cy="788" r="2.4" fill="#000"/>
<text transform="translate(476.4,792) scale(1,1.07)" x="0" y="0" font-size="13" fill="#583212" textLength="83.7" lengthAdjust="spacingAndGlyphs">Hang Analysis</text>
<line x1="476.4" y1="793.5" x2="560.12475" y2="793.5" stroke="#583212" stroke-width="1"/>
<circle cx="463.7" cy="806" r="2.4" fill="#000"/>
<text transform="translate(476.4,810) scale(1,1.07)" x="0" y="0" font-size="13" fill="#583212" textLength="88.1" lengthAdjust="spacingAndGlyphs">Instance Locks</text>
<line x1="476.4" y1="811.5" x2="564.522125" y2="811.5" stroke="#583212" stroke-width="1"/>
<circle cx="463.7" cy="824" r="2.4" fill="#000"/>
<text transform="translate(476.4,828) scale(1,1.07)" x="0" y="0" font-size="13" fill="#583212" textLength="94.7" lengthAdjust="spacingAndGlyphs">Instance Activity</text>
<line x1="476.4" y1="829.5" x2="571.11025" y2="829.5" stroke="#583212" stroke-width="1"/>
<circle cx="463.7" cy="842" r="2.4" fill="#000"/>
<text transform="translate(476.4,846) scale(1,1.07)" x="0" y="0" font-size="13" fill="#583212" textLength="167.4" lengthAdjust="spacingAndGlyphs">Baseline Normalized Metrics</text>
<line x1="476.4" y1="847.5" x2="643.801875" y2="847.5" stroke="#583212" stroke-width="1"/>
<circle cx="868" cy="788" r="2.4" fill="#000"/>
<text transform="translate(881.3,792) scale(1,1.07)" x="0" y="0" font-size="13" fill="#583212" textLength="99.1" lengthAdjust="spacingAndGlyphs">Search Sessions</text>
<line x1="881.3" y1="793.5" x2="980.4393749999999" y2="793.5" stroke="#583212" stroke-width="1"/>
<circle cx="868" cy="806" r="2.4" fill="#000"/>
<text transform="translate(881.3,810) scale(1,1.07)" x="0" y="0" font-size="13" fill="#583212" textLength="62.4" lengthAdjust="spacingAndGlyphs">Snapshots</text>
<line x1="881.3" y1="811.5" x2="943.736375" y2="811.5" stroke="#583212" stroke-width="1"/>
<circle cx="868" cy="824" r="2.4" fill="#000"/>
<text transform="translate(881.3,828) scale(1,1.07)" x="0" y="0" font-size="13" fill="#583212" textLength="99.4" lengthAdjust="spacingAndGlyphs">SQL Tuning Sets</text>
<line x1="881.3" y1="829.5" x2="980.6775" y2="829.5" stroke="#583212" stroke-width="1"/>
</svg>
</body></html>
